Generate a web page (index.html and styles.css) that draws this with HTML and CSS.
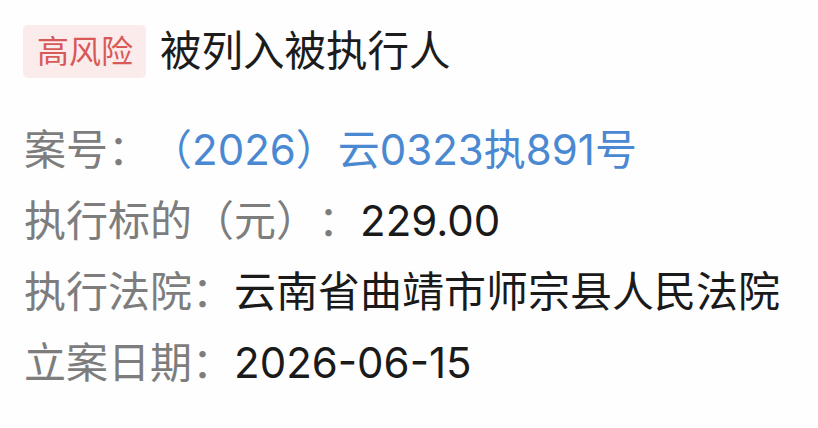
FILE: index.html
```html
<!DOCTYPE html>
<html lang="zh-CN">
<head>
<meta charset="utf-8">
<link rel="stylesheet" href="styles.css">
</head>
<body>
<div class="card">
  <div class="header">
    <span class="badge">高风险</span>
    <span class="title">被列入被执行人</span>
  </div>
  <div class="rows">
    <div class="row"><span class="label">案号：</span><span class="value link">（2026）云0323执891号</span></div>
    <div class="row"><span class="label">执行标的（元）：</span><span class="value">229.00</span></div>
    <div class="row"><span class="label">执行法院：</span><span class="value">云南省曲靖市师宗县人民法院</span></div>
    <div class="row"><span class="label">立案日期：</span><span class="value">2026-06-15</span></div>
  </div>
</div>
</body>
</html>
```
FILE: styles.css
```css
html, body {
  margin: 0;
  padding: 0;
  background: #fefefe;
}
body {
  font-family: "Inter", "Noto Sans CJK SC", "Noto Sans", sans-serif;
  width: 818px;
  height: 428px;
  overflow: hidden;
  text-spacing-trim: space-all;
}
.card {
  padding: 25px 0 0 23px;
}
.header {
  display: flex;
  align-items: center;
  gap: 14px;
  height: 53px;
}
.badge {
  display: block;
  background: #fcebeb;
  color: #d85a58;
  font-size: 32px;
  line-height: 53px;
  height: 53px;
  padding: 0 13px 0 14px;
  border-radius: 5px;
}
.title {
  font-size: 41.5px;
  line-height: 53px;
  color: #1c1c1c;
}
.rows {
  margin-top: 36px;
  padding-left: 1px;
}
.row {
  display: flex;
  font-size: 42px;
  line-height: 71px;
  height: 71px;
  white-space: nowrap;
}
.label {
  color: #7d7d7d;
}
.value {
  color: #1a1a1a;
}
.value.link {
  color: #4a89d2;
}
```
